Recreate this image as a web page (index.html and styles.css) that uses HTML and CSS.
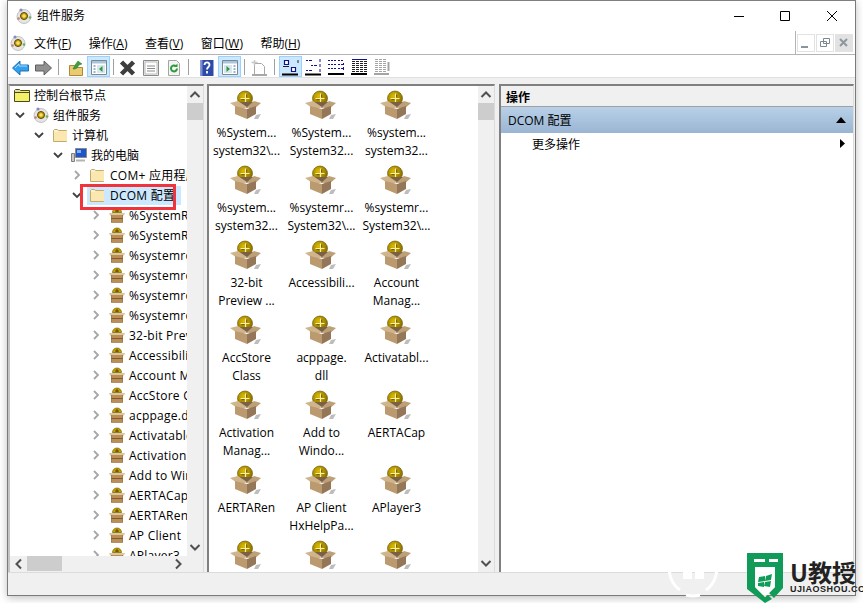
FILE: index.html
```html
<!DOCTYPE html>
<html lang="zh-CN">
<head>
  <meta charset="UTF-8">
  <title>组件服务</title>
  <link rel="stylesheet" href="styles.css">
</head>

<body>
  <!-- Shared icons -->
  <svg class="defs" width="0" height="0">
    <defs>
      <radialGradient id="coin" cx="0.4" cy="0.35" r="0.7">
        <stop offset="0" stop-color="#dcbc00"/>
        <stop offset="1" stop-color="#7f6600"/>
      </radialGradient>
      <symbol id="pkg" viewBox="0 0 32 32">
        <path d="M26 25l5-1-3 5-4 0z" fill="#bdbdbd"/>
        <circle cx="15" cy="8.500" r="7.500" fill="url(#coin)" stroke="#5e4c00" stroke-width=".6"/>
        <path d="M15.500 3.500v9M10.500 8.500h9" stroke="#fff0a0" stroke-width="1.200" fill="none"/>
        <path d="M14.500 9.700h-3M16.700 7.500v-3" stroke="#4a3c00" stroke-width=".8"/>
        <path d="M8 12h16l-7 6z" fill="#7a6044"/>
        <path d="M0 13l8-2 9 6-7 3z" fill="#cfb48c"/>
        <path d="M31 13l-7-2-7 6 6 3z" fill="#bda078"/>
        <path d="M5 16l12 3v10L5 24z" fill="#bb9a70"/>
        <path d="M17 19l9-3v8l-9 5z" fill="#947658"/>
      </symbol>
      <symbol id="pkgs" viewBox="0 0 16 16">
        <path d="M3.500 5.500a4.500 4.500 0 0 1 9 0z" fill="#c8a400" stroke="#6e5a00" stroke-width=".7"/>
        <path d="M8 2v3M6 4h4" stroke="#3e3200" stroke-width=".8"/>
        <path d="M0 6h16l-1 2.500H1z" fill="#dcc6a0"/>
        <path d="M2 8h12v7.500H2z" fill="#bb8e58"/>
        <path d="M2 11.500h12" stroke="#7d5a30"/>
        <path d="M2.500 8v7.500h11V8" fill="none" stroke="#94703f" stroke-width=".6"/>
      </symbol>
      <symbol id="folder" viewBox="0 0 16 16">
        <path d="M1.500 14.500v-11l1-1h3l1 1h8v11z" fill="#f5e3a4" stroke="#c2ab6c"/>
        <path d="M2 14V5h4l1-1h8v10z" fill="#fae8b0"/>
        <path d="M2 3.500h3.500l1 1H2z" fill="#fff"/>
      </symbol>
      <symbol id="root" viewBox="0 0 16 16">
        <path d="M.500 14.500v-11l1-1h4l1 1h9v11z" fill="#f3f06a" stroke="#4d4820"/>
        <path d="M1 5.500h14" stroke="#4d4820"/>
        <path d="M1 3.500h5v1.500H1z" fill="#d8d8c0"/>
      </symbol>
      <symbol id="svc" viewBox="0 0 16 16">
        <circle cx="8" cy="8.500" r="7" fill="#e4e4e4" stroke="#c4c4c4"/>
        <circle cx="8" cy="8" r="3.500" fill="#c8a000" stroke="#5a4800"/>
        <path d="M8 6v4M6 8h4" stroke="#fff2a0"/>
        <circle cx="5" cy="2" r="1.600" fill="#8a86c8"/>
        <circle cx="14" cy="9.500" r="1.300" fill="#6cae5c"/>
        <circle cx="2.500" cy="10.500" r="1.300" fill="#c87c7c"/>
      </symbol>
      <symbol id="chev-r" viewBox="0 0 10 10"><path d="M3 1l4 4-4 4" fill="none" stroke="#a6a6a6" stroke-width="1.800"/></symbol>
      <symbol id="chev-d" viewBox="0 0 10 10"><path d="M1 3l4 4 4-4" fill="none" stroke="#404040" stroke-width="1.800"/></symbol>
    </defs>
  </svg>

  <div class="window">
    <!-- Title bar -->
    <div class="titlebar">
      <svg class="title-icon"><use href="#svc"/></svg>
      <span class="title-text">组件服务</span>
      <div class="caption">
        <svg width="46" height="30" viewBox="0 0 46 30"><path d="M17 15.500h10" stroke="#000"/></svg>
        <svg width="46" height="30" viewBox="0 0 46 30"><path d="M17.500 10.500h9v9h-9z" fill="none" stroke="#000"/></svg>
        <svg width="46" height="30" viewBox="0 0 46 30"><path d="M18 10l10 10M28 10L18 20" stroke="#000" fill="none"/></svg>
      </div>
    </div>

    <!-- Menu bar -->
    <div class="menubar">
      <svg class="menu-icon"><use href="#svc"/></svg>
      <span class="menu-item">文件(<u>F</u>)</span>
      <span class="menu-item">操作(<u>A</u>)</span>
      <span class="menu-item">查看(<u>V</u>)</span>
      <span class="menu-item">窗口(<u>W</u>)</span>
      <span class="menu-item">帮助(<u>H</u>)</span>
      <div class="mdi-buttons">
        <span class="mdi-btn"><svg width="16" height="16" viewBox="0 0 16 16"><path d="M3 11h7v2H3z" fill="#8a949c"/></svg></span>
        <span class="mdi-btn"><svg width="16" height="16" viewBox="0 0 16 16"><path d="M6.500 3.500h6v5h-6zM3.500 6.500h6v5h-6z" fill="#fff" stroke="#7c8790"/></svg></span>
        <span class="mdi-btn off"><svg width="16" height="16" viewBox="0 0 16 16"><path d="M4 4l7 7M11 4l-7 7" stroke="#8f979e" stroke-width="2"/></svg></span>
      </div>
    </div>

    <!-- Toolbar -->
    <div class="toolbar">
      <span class="tool"><svg width="17" height="16" viewBox="0 0 17 16"><path d="M.500 8L8 1v4h8.500v6H8v4z" fill="#35a0ea" stroke="#1c72b8"/><path d="M3 8l4-4v2h8" fill="none" stroke="#a8dcff"/></svg></span>
      <span class="tool"><svg width="17" height="16" viewBox="0 0 17 16"><path d="M16.500 8L9 1v4H.500v6H9v4z" fill="#909090" stroke="#5e5e5e"/></svg></span>
      <i class="sep wide"></i>
      <span class="tool"><svg width="16" height="16" viewBox="0 0 16 16"><path d="M1.500 15.500v-10h5l2 2h6v8z" fill="#ecca70" stroke="#a98a3a"/><path d="M5 9l2-4 3-4 4 3-3 1-2 3-2 1z" fill="#3f9c3f" stroke="#2a7a2a" stroke-width=".5"/></svg></span>
      <span class="tool on"><svg width="16" height="15" viewBox="0 0 16 15"><path d="M.500 .500h15v14H.500z" fill="#fff" stroke="#7c8790"/><path d="M1 1h14v2.500H1z" fill="#a9c5dc"/><path d="M6 5h8v8H6z" fill="#d6e6f2"/><path d="M11.500 6v6L8 9z" fill="#2f9a3a"/><path d="M2.500 6h2M2.500 9h2M2.500 12h2" stroke="#3a6a98"/></svg></span>
      <i class="sep tight"></i>
      <span class="tool"><svg width="17" height="16" viewBox="0 0 17 16"><path d="M2.500 2l12 12M14.500 2l-12 12" stroke="#3e3e3e" stroke-width="4.500"/></svg></span>
      <span class="tool"><svg width="16" height="16" viewBox="0 0 16 16"><path d="M.500 .500h15v15H.500z" fill="#f0f0f0" stroke="#8a8a8a"/><path d="M2 2h12v12H2z" fill="#fff" stroke="#bbb"/><path d="M4 6h8M4 8.500h8M4 11h8" stroke="#8a8a8a"/></svg></span>
      <span class="tool"><svg width="16" height="16" viewBox="0 0 16 16"><path d="M2.500 .5h8l3 3v12h-11z" fill="#f4f4f4" stroke="#a4a4a4"/><path d="M11 8.500a3 3 0 1 1-1-2.300" fill="none" stroke="#2f9a3a" stroke-width="2"/><path d="M11.500 3.500v3.500h-3.500z" fill="#2f9a3a"/></svg></span>
      <i class="sep wide2"></i>
      <span class="tool"><svg width="16" height="16" viewBox="0 0 16 16"><path d="M1.500 0h13v16h-13z" fill="#2e4aa8"/><path d="M1.500 0h2v16h-2z" fill="#7a8ed0"/><path d="M5.500 5c0-3.500 5-3.500 5 0 0 2-2.500 2-2.500 4.500M8 11v2.500" fill="none" stroke="#fff" stroke-width="1.800"/></svg></span>
      <span class="tool on"><svg width="16" height="15" viewBox="0 0 16 15"><path d="M.500 .500h15v14H.500z" fill="#fff" stroke="#7c8790"/><path d="M1 1h14v2.500H1z" fill="#a9c5dc"/><path d="M2 5h8v8H2z" fill="#d6e6f2"/><path d="M4.500 6v6L8 9z" fill="#2f9a3a"/><path d="M11.500 6h2M11.500 9h2M11.500 12h2" stroke="#3a6a98"/></svg></span>
      <i class="sep mid"></i>
      <span class="tool"><svg width="17" height="16" viewBox="0 0 17 16"><path d="M3.500 14.500V3.500h7l3 3v8" fill="#fff" stroke="#a8a8a8"/><path d="M1 15h15" stroke="#a8a8a8" stroke-width="2"/><path d="M3.500 0v5.500M.500 2.500h6" stroke="#c8c8c8" stroke-width="1.500"/></svg></span>
      <i class="sep wide3"></i>
      <span class="tool on"><svg width="17" height="17" viewBox="0 0 17 17"><path d="M2.500 1.500h4v4h-4zM9.500 8.500h4v4h-4z" fill="#fff" stroke="#12128a" stroke-width="1.200"/><path d="M1 7.500h6M16 1v3" stroke="#222"/><path d="M0 15.500h16" stroke="#000" stroke-width="2"/></svg></span>
      <span class="tool"><svg width="17" height="17" viewBox="0 0 17 17"><path d="M1 1.500h2M4 1.500h3M15 0v3M6 6.500h2M9 6.500h3M15 5v3M1 11.500h2M4 11.500h3M15 10v3" stroke="#12128a"/><path d="M0 15.500h16" stroke="#000" stroke-width="2"/></svg></span>
      <span class="tool"><svg width="17" height="17" viewBox="0 0 17 17"><path d="M0 1.500h2M3 1.500h2M6 1.500h2M10 1.500h2M13 1.500h2M0 5.500h2M3 5.500h2M6 5.500h2M10 5.500h2M13 5.500h2M0 9.500h2M3 9.500h2M6 9.500h2M10 9.500h2M13 9.500h2" stroke="#12128a"/><path d="M15.500 4v2M15.500 8v3" stroke="#12128a"/><path d="M0 15h16" stroke="#000" stroke-width="2"/></svg></span>
      <span class="tool"><svg width="17" height="17" viewBox="0 0 17 17"><path d="M1 .500h15" stroke="#12128a"/><path d="M1 2.500h15M1 4.500h15M1 6.500h15M1 8.500h15M1 10.500h15M1 12.500h15" stroke="#222" stroke-dasharray="3 1"/><path d="M0 15h16" stroke="#000" stroke-width="2"/></svg></span>
      <span class="tool"><svg width="17" height="17" viewBox="0 0 17 17"><path d="M1 .500h12M1 2.500h12M1 4.500h12M1 6.500h12M1 8.500h12M1 10.500h12M1 12.500h12" stroke="#a4a4a4" stroke-dasharray="3 1"/><path d="M14.500 3v9" stroke="#a4a4a4" stroke-width="2"/><path d="M0 15h15" stroke="#a4a4a4" stroke-width="2"/></svg></span>
    </div>

    <!-- Panes -->
    <div class="panes">
      <div class="pane tree-pane">
        <div class="tree-view">
          <div class="tree-rows" id="tree">
            <div class="row d0"><svg class="icn"><use href="#root"/></svg><span>控制台根节点</span></div>
            <div class="row d1"><svg class="arrow"><use href="#chev-d"/></svg><svg class="icn"><use href="#svc"/></svg><span>组件服务</span></div>
            <div class="row d2"><svg class="arrow"><use href="#chev-d"/></svg><svg class="icn"><use href="#folder"/></svg><span>计算机</span></div>
            <div class="row d3"><svg class="arrow"><use href="#chev-d"/></svg><svg class="icn" viewBox="0 0 16 16"><path d="M4.500 1.500h11v9h-11z" fill="#1f55c8" stroke="#8a8a8a"/><path d="M6 3h4v3H6z" fill="#7fb0f0"/><path d="M.500 6.500h3v8h-3z" fill="#c8c8c8" stroke="#808080"/><path d="M5 12.500h9v2H5z" fill="#b4b4b4"/></svg><span>我的电脑</span></div>
            <div class="row d4"><svg class="arrow"><use href="#chev-r"/></svg><svg class="icn"><use href="#folder"/></svg><span>COM+ 应用程序</span></div>
            <div class="row d4"><svg class="arrow"><use href="#chev-d"/></svg><div class="selected"><svg class="icn"><use href="#folder"/></svg><span>DCOM 配置</span></div></div>
            <div class="row d5"><svg class="arrow"><use href="#chev-r"/></svg><svg class="icn"><use href="#pkgs"/></svg><span>%SystemRoot%</span></div>
            <div class="row d5"><svg class="arrow"><use href="#chev-r"/></svg><svg class="icn"><use href="#pkgs"/></svg><span>%SystemRoot%</span></div>
            <div class="row d5"><svg class="arrow"><use href="#chev-r"/></svg><svg class="icn"><use href="#pkgs"/></svg><span>%systemroot%</span></div>
            <div class="row d5"><svg class="arrow"><use href="#chev-r"/></svg><svg class="icn"><use href="#pkgs"/></svg><span>%systemroot%</span></div>
            <div class="row d5"><svg class="arrow"><use href="#chev-r"/></svg><svg class="icn"><use href="#pkgs"/></svg><span>%systemroot%</span></div>
            <div class="row d5"><svg class="arrow"><use href="#chev-r"/></svg><svg class="icn"><use href="#pkgs"/></svg><span>%systemroot%</span></div>
            <div class="row d5"><svg class="arrow"><use href="#chev-r"/></svg><svg class="icn"><use href="#pkgs"/></svg><span>32-bit Preview</span></div>
            <div class="row d5"><svg class="arrow"><use href="#chev-r"/></svg><svg class="icn"><use href="#pkgs"/></svg><span>Accessibility</span></div>
            <div class="row d5"><svg class="arrow"><use href="#chev-r"/></svg><svg class="icn"><use href="#pkgs"/></svg><span>Account Manager</span></div>
            <div class="row d5"><svg class="arrow"><use href="#chev-r"/></svg><svg class="icn"><use href="#pkgs"/></svg><span>AccStore Class</span></div>
            <div class="row d5"><svg class="arrow"><use href="#chev-r"/></svg><svg class="icn"><use href="#pkgs"/></svg><span>acppage.dll</span></div>
            <div class="row d5"><svg class="arrow"><use href="#chev-r"/></svg><svg class="icn"><use href="#pkgs"/></svg><span>Activatable</span></div>
            <div class="row d5"><svg class="arrow"><use href="#chev-r"/></svg><svg class="icn"><use href="#pkgs"/></svg><span>Activation</span></div>
            <div class="row d5"><svg class="arrow"><use href="#chev-r"/></svg><svg class="icn"><use href="#pkgs"/></svg><span>Add to Windows</span></div>
            <div class="row d5"><svg class="arrow"><use href="#chev-r"/></svg><svg class="icn"><use href="#pkgs"/></svg><span>AERTACap</span></div>
            <div class="row d5"><svg class="arrow"><use href="#chev-r"/></svg><svg class="icn"><use href="#pkgs"/></svg><span>AERTARen</span></div>
            <div class="row d5"><svg class="arrow"><use href="#chev-r"/></svg><svg class="icn"><use href="#pkgs"/></svg><span>AP Client</span></div>
            <div class="row d5"><svg class="arrow"><use href="#chev-r"/></svg><svg class="icn"><use href="#pkgs"/></svg><span>APlayer3</span></div>
          </div>
          <div class="vscroll">
            <svg width="16" height="17" viewBox="0 0 16 17"><path d="M3.500 11l4.500-4.500 4.500 4.500" fill="none" stroke="#505050" stroke-width="2"/></svg>
            <div class="vtrack"><div class="vthumb"></div></div>
            <svg width="16" height="17" viewBox="0 0 16 17"><path d="M3.500 6l4.500 4.500L12.500 6" fill="none" stroke="#505050" stroke-width="2"/></svg>
          </div>
        </div>
        <div class="hscroll">
          <svg width="17" height="16" viewBox="0 0 17 16"><path d="M11 3.500L6.500 8l4.500 4.500" fill="none" stroke="#505050" stroke-width="2"/></svg>
          <div class="htrack"><div class="hthumb"></div></div>
          <svg width="17" height="16" viewBox="0 0 17 16"><path d="M6 3.500L10.500 8 6 12.500" fill="none" stroke="#505050" stroke-width="2"/></svg>
        </div>
      </div>

      <div class="pane list-pane">
        <div class="icon-grid">
          <div class="item"><svg class="big"><use href="#pkg"/></svg><span>%System...<br>system32\...</span></div>
          <div class="item"><svg class="big"><use href="#pkg"/></svg><span>%System...<br>System32...</span></div>
          <div class="item"><svg class="big"><use href="#pkg"/></svg><span>%system...<br>system32...</span></div>
          <div class="item"><svg class="big"><use href="#pkg"/></svg><span>%system...<br>system32...</span></div>
          <div class="item"><svg class="big"><use href="#pkg"/></svg><span>%systemr...<br>System32\...</span></div>
          <div class="item"><svg class="big"><use href="#pkg"/></svg><span>%systemr...<br>System32\...</span></div>
          <div class="item"><svg class="big"><use href="#pkg"/></svg><span>32-bit<br>Preview ...</span></div>
          <div class="item"><svg class="big"><use href="#pkg"/></svg><span>Accessibili...</span></div>
          <div class="item"><svg class="big"><use href="#pkg"/></svg><span>Account<br>Manag...</span></div>
          <div class="item"><svg class="big"><use href="#pkg"/></svg><span>AccStore<br>Class</span></div>
          <div class="item"><svg class="big"><use href="#pkg"/></svg><span>acppage.<br>dll</span></div>
          <div class="item"><svg class="big"><use href="#pkg"/></svg><span>Activatabl...</span></div>
          <div class="item"><svg class="big"><use href="#pkg"/></svg><span>Activation<br>Manag...</span></div>
          <div class="item"><svg class="big"><use href="#pkg"/></svg><span>Add to<br>Windo...</span></div>
          <div class="item"><svg class="big"><use href="#pkg"/></svg><span>AERTACap</span></div>
          <div class="item"><svg class="big"><use href="#pkg"/></svg><span>AERTARen</span></div>
          <div class="item"><svg class="big"><use href="#pkg"/></svg><span>AP Client<br>HxHelpPa...</span></div>
          <div class="item"><svg class="big"><use href="#pkg"/></svg><span>APlayer3</span></div>
          <div class="item"><svg class="big"><use href="#pkg"/></svg></div>
          <div class="item"><svg class="big"><use href="#pkg"/></svg></div>
          <div class="item"><svg class="big"><use href="#pkg"/></svg></div>
        </div>
        <div class="vscroll">
          <svg width="16" height="17" viewBox="0 0 16 17"><path d="M3.500 11l4.500-4.500 4.500 4.500" fill="none" stroke="#505050" stroke-width="2"/></svg>
          <div class="vtrack"><div class="vthumb"></div></div>
          <svg width="16" height="17" viewBox="0 0 16 17"><path d="M3.500 6l4.500 4.500L12.500 6" fill="none" stroke="#505050" stroke-width="2"/></svg>
        </div>
      </div>

      <div class="pane action-pane">
        <div class="action-head">操作</div>
        <div class="action-group"><span>DCOM 配置</span><svg width="10" height="6" viewBox="0 0 10 6"><path d="M5 0l5 6H0z" fill="#000"/></svg></div>
        <div class="action-item"><span>更多操作</span><svg width="5" height="9" viewBox="0 0 5 9"><path d="M0 0l5 4.500L0 9z" fill="#000"/></svg></div>
      </div>
    </div>

    <div class="statusbar"></div>
  </div>

  <!-- Red highlight and watermark added on top of the screenshot -->
  <div class="callout"></div>
  <svg class="ring" width="58" height="60" viewBox="0 0 58 60">
    <path d="M10 16A25 25 0 0 1 27 5M32 5a25 25 0 0 1 17 11M52 24a25 25 0 0 1-10 26M36 55a25 25 0 0 1-14 0M16 50A25 25 0 0 1 6 24" fill="none" stroke="#fff" stroke-width="3"/>
    <path d="M19 30h9v9h-9zM31 30h9v9h-9z" fill="#fff"/>
  </svg>
  <div class="logo">
    <svg width="37" height="50" viewBox="0 0 37 50"><path d="M0 0h36v35L27 45l-5-5 6-6V14H8v20l10 10 3-2 4 4-7 4L0 36z" fill="#109c58"/><path d="M7 6h11v3H7zM22 6h9v3H22z" fill="#fff"/><path d="M8 14h20v20l-10 10L8 34z" fill="#fff" opacity=".85"/><path d="M12 24l6-1v5l-7 1zM19 23l6-2-1 6-6 1zM11 30l6-1v5l-6-1zM18 29l6-1-1 6-6-1z" fill="#109c58"/></svg>
    <div class="logo-text"><b>U教授</b><small>UJIAOSHOU.COM</small></div>
  </div>
</body>
</html>
```

FILE: styles.css
```css
/* Basic reset */
* {
  margin: 0;
  padding: 0;
  box-sizing: border-box;
}

body {
  width: 863px;
  height: 603px;
  overflow: hidden;
  background-color: #fff;
  position: relative;
  font-family: "Open Sans", "Noto Sans CJK SC", sans-serif;
  font-size: 12px;
  color: #000;
}

.defs {
  position: absolute;
}

/* Main window */
.window {
  width: 849px;
  height: 596px;
  margin-left: 7px;
  border: 1px solid #7a7a7a;
  border-top-color: #808080;
  box-shadow: 0 2px 8px rgba(0, 0, 0, 0.25);
  background-color: #fff;
  display: flex;
  flex-direction: column;
}

/* Title bar */
.titlebar {
  height: 30px;
  flex: none;
  display: flex;
  align-items: center;
  padding-left: 8px;
  padding-bottom: 1px;
}

.title-icon {
  width: 16px;
  height: 16px;
}

.title-text {
  margin-left: 5px;
  margin-bottom: 2px;
}

.caption {
  margin-left: auto;
  display: flex;
}

/* Menu bar */
.menubar {
  height: 24px;
  flex: none;
  display: flex;
  align-items: center;
  padding-left: 2px;
  border-bottom: 1px solid #b4b4b4;
  gap: 17.5px;
}

.menu-icon {
  width: 16px;
  height: 16px;
  margin-right: -9.5px;
}

.mdi-buttons {
  margin-left: auto;
  height: 100%;
  display: flex;
  align-items: center;
  gap: 1px;
  padding-left: 1px;
  border-left: 1px solid #b4b4b4;
  margin-right: 2px;
}

.mdi-btn {
  width: 18px;
  height: 18px;
  border: 1px solid #e2e2e2;
  display: flex;
  align-items: center;
  justify-content: center;
}

.mdi-btn.off {
  background-color: #e2e2e2;
}

/* Toolbar */
.toolbar {
  height: 23px;
  flex: none;
  display: flex;
  align-items: center;
  padding: 1px 0 0 1px;
  border-bottom: 1px solid #e0e0e0;
}

.tool {
  width: 23px;
  height: 21px;
  display: flex;
  align-items: center;
  justify-content: center;
}

.tool svg {
  margin-top: 2px;
}

.tool.on {
  background-color: #cce8ff;
  border: 1px solid #99d1ff;
}

.sep {
  width: 1px;
  height: 16px;
  background-color: #a0a0a0;
  margin-left: 3px;
}

.sep.wide { margin-right: 5px; }
.sep.tight { margin-right: 2px; }
.sep.wide2 { margin-right: 6px; }
.sep.mid { margin-right: 3px; }
.sep.wide3 { margin-right: 4px; }

/* Panes */
.panes {
  flex: 1;
  min-height: 0;
  display: flex;
  gap: 3px;
  background-color: #f0f0f0;
  padding: 6px 1px 0 0;
}

.pane {
  background-color: #fff;
  border: 1px solid #dcdcdc;
  border-top: 2px solid #808080;
  border-left: 2px solid #808080;
  border-bottom: 0;
  min-height: 0;
  overflow: hidden;
}

.tree-pane {
  width: 196px;
  display: flex;
  flex-direction: column;
  border-left-color: #c4c4c4;
}

.tree-view {
  flex: 1;
  min-height: 0;
  display: flex;
}

.tree-rows {
  flex: 1;
  min-width: 0;
  overflow: hidden;
}

.row {
  height: 20px;
  display: flex;
  align-items: center;
  white-space: nowrap;
}

.row:first-child {
  margin-top: -1px;
}

.row .icn {
  width: 16px;
  height: 16px;
  margin-right: 4px;
  flex: none;
}

.row .arrow {
  width: 10px;
  height: 10px;
  margin-right: 8px;
  flex: none;
}

.row.d0 { padding-left: 4px; }
.row.d1 { padding-left: 5px; }
.row.d2 { padding-left: 24px; }
.row.d3 { padding-left: 43px; }

.row.d4 {
  padding-left: 62px;
  letter-spacing: 0.25px;
}

.row.d4 .arrow {
  margin-right: 7px;
}

.row.d4 .icn {
  margin-right: 5px;
}

.row.d5 {
  padding-left: 81px;
  letter-spacing: 0.25px;
}

.selected {
  display: flex;
  align-items: center;
  height: 19px;
  margin-left: -2px;
  padding: 0 6px 0 2px;
  background-color: #cce8ff;
}

.vscroll {
  width: 16px;
  flex: none;
  display: flex;
  flex-direction: column;
  background-color: #f0f0f0;
}

.vtrack {
  flex: 1;
}

.vthumb {
  height: 17px;
  background-color: #cdcdcd;
}

.hscroll {
  height: 16px;
  flex: none;
  display: flex;
  background-color: #f0f0f0;
  padding-right: 16px;
}

.htrack {
  flex: 1;
}

.hthumb {
  width: 35px;
  height: 15px;
  background-color: #cdcdcd;
}

/* Icon view */
.list-pane {
  width: 288px;
  display: flex;
}

.icon-grid {
  flex: 1;
  min-width: 0;
  overflow: hidden;
  display: grid;
  grid-template-columns: repeat(3, 75px);
  grid-auto-rows: 75px;
  align-content: start;
  padding-top: 4px;
}

.item {
  display: flex;
  flex-direction: column;
  align-items: center;
  text-align: center;
  line-height: 18px;
  white-space: nowrap;
}

.item .big {
  width: 32px;
  height: 32px;
  margin: 0 0 2px -2px;
  flex: none;
}

/* Action pane */
.action-pane {
  flex: 1;
  min-width: 0;
  margin-left: 1px;
}

.action-head {
  height: 21px;
  background-color: #f0f0f0;
  border-bottom: 1px solid #a0a0a0;
  font-weight: bold;
  line-height: 23px;
  padding-left: 5px;
}

.action-group {
  height: 26px;
  background: linear-gradient(#b9d1e8, #9ab5d3);
  display: flex;
  align-items: center;
  justify-content: space-between;
  padding: 0 7px;
}

.action-item {
  height: 21px;
  display: flex;
  align-items: center;
  justify-content: space-between;
  padding: 0 8px 0 31px;
}

/* Status bar */
.statusbar {
  height: 23px;
  flex: none;
  background-color: #f0f0f0;
  border-top: 1px solid #dcdcdc;
}

/* Red highlight box */
.callout {
  position: absolute;
  left: 80px;
  top: 184px;
  width: 96px;
  height: 26px;
  border: 3px solid #f0343c;
}

/* Watermark */
.ring {
  position: absolute;
  left: 664px;
  top: 540px;
}

.logo {
  position: absolute;
  left: 747px;
  top: 553px;
  display: flex;
  gap: 6px;
}

.logo-text {
  display: flex;
  flex-direction: column;
  padding-top: 6px;
}

.logo-text b {
  font-family: "Noto Sans CJK SC", sans-serif;
  font-size: 24px;
  line-height: 26px;
  color: #222;
  white-space: nowrap;
}

.logo-text small {
  font-family: "Liberation Sans", sans-serif;
  font-size: 9px;
  line-height: 9px;
  font-weight: bold;
  letter-spacing: 0.5px;
  color: #222;
  white-space: nowrap;
}
```
